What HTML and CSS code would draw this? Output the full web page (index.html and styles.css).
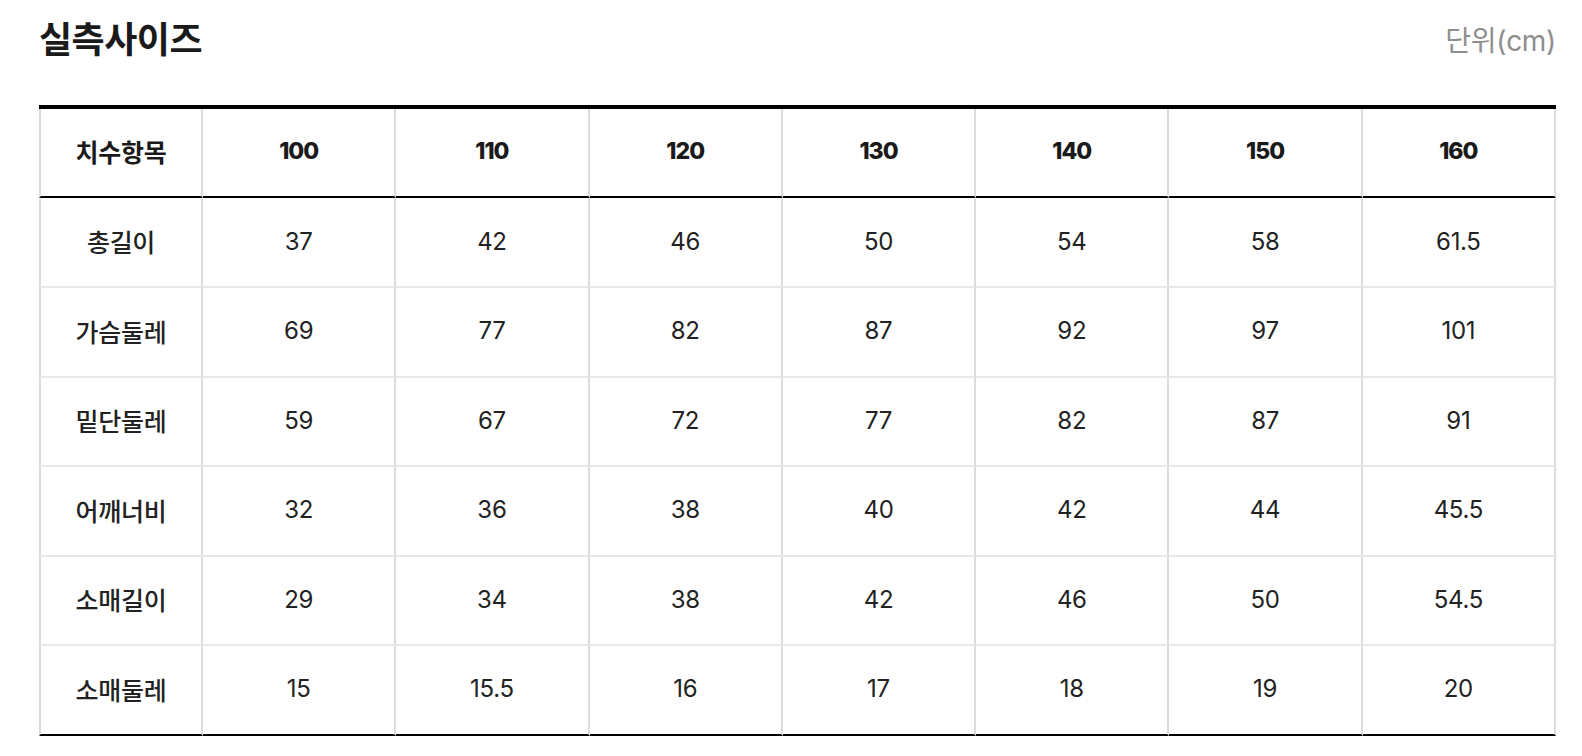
FILE: index.html
```html
<!DOCTYPE html>
<html lang="ko">
<head>
<meta charset="utf-8">
<title>실측사이즈</title>
<link rel="stylesheet" href="styles.css">
</head>
<body>
<section class="size-section">
  <header class="size-head">
    <h2 class="size-title">실측사이즈</h2>
    <span class="size-unit">단위(cm)</span>
  </header>
  <div class="size-table">
    <div class="cell th first">치수항목</div>
    <div class="cell th num">100</div>
    <div class="cell th num">110</div>
    <div class="cell th num">120</div>
    <div class="cell th num">130</div>
    <div class="cell th num">140</div>
    <div class="cell th num">150</div>
    <div class="cell th num">160</div>

    <div class="cell label first">총길이</div>
    <div class="cell">37</div><div class="cell">42</div><div class="cell">46</div><div class="cell">50</div><div class="cell">54</div><div class="cell">58</div><div class="cell">61.5</div>

    <div class="cell label first">가슴둘레</div>
    <div class="cell">69</div><div class="cell">77</div><div class="cell">82</div><div class="cell">87</div><div class="cell">92</div><div class="cell">97</div><div class="cell">101</div>

    <div class="cell label first">밑단둘레</div>
    <div class="cell">59</div><div class="cell">67</div><div class="cell">72</div><div class="cell">77</div><div class="cell">82</div><div class="cell">87</div><div class="cell">91</div>

    <div class="cell label first">어깨너비</div>
    <div class="cell">32</div><div class="cell">36</div><div class="cell">38</div><div class="cell">40</div><div class="cell">42</div><div class="cell">44</div><div class="cell">45.5</div>

    <div class="cell label first">소매길이</div>
    <div class="cell">29</div><div class="cell">34</div><div class="cell">38</div><div class="cell">42</div><div class="cell">46</div><div class="cell">50</div><div class="cell">54.5</div>

    <div class="cell label first last">소매둘레</div>
    <div class="cell last">15</div><div class="cell last">15.5</div><div class="cell last">16</div><div class="cell last">17</div><div class="cell last">18</div><div class="cell last">19</div><div class="cell last">20</div>
  </div>
</section>
</body>
</html>
```

FILE: styles.css
```css
* { box-sizing: border-box; }

html, body {
  margin: 0;
  padding: 0;
  background: #fff;
}

body {
  font-family: Inter, "Noto Sans CJK KR", sans-serif;
  color: #222;
}

.size-section {
  width: 1582px;
  padding: 0 26px 0 39px;
}

.size-head {
  display: flex;
  justify-content: space-between;
  align-items: flex-start;
  height: 105px;
}

.size-title {
  margin: 13px 0 0 0;
  font-family: "Noto Sans CJK KR", sans-serif;
  font-size: 36px;
  line-height: 48px;
  font-weight: 700;
  color: #1a1a1a;
  letter-spacing: -0.5px;
}

.size-unit {
  margin-top: 22px;
  font-family: Inter, "Noto Sans CJK KR", sans-serif;
  font-size: 28px;
  line-height: 38px;
  color: #8e8e8e;
  letter-spacing: -0.3px;
}

.size-table {
  display: grid;
  grid-template-columns: 164px repeat(7, 1fr);
  grid-auto-rows: 89.5px;
  width: 1517px;
  border-top: 4px solid #000;
}

.cell {
  display: flex;
  align-items: center;
  justify-content: center;
  padding-bottom: 2px;
  border-right: 2px solid #dcdcdc;
  border-bottom: 2px solid #e8e8e8;
  font-size: 24px;
  font-weight: 400;
  color: #222;
  letter-spacing: -0.3px;
}

.cell.first { border-left: 2px solid #dcdcdc; }

.cell.th {
  height: 89px;
  padding-bottom: 3px;
  border-bottom-color: #000;
  font-weight: 700;
  color: #1a1a1a;
}

.cell.th.first {
  font-family: "Noto Sans CJK KR", sans-serif;
  font-size: 25px;
}

.cell.num {
  font-size: 23px;
  font-weight: 800;
  letter-spacing: -1px;
}

.cell.label {
  font-family: "Noto Sans CJK KR", sans-serif;
  font-size: 25px;
  font-weight: 500;
}

.cell.last { border-bottom-color: #000; }
```
